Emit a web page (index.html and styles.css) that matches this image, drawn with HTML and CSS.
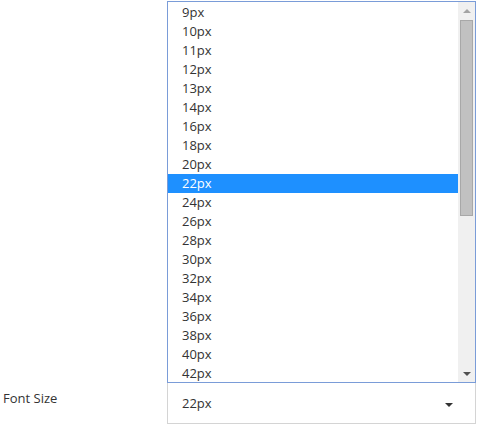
FILE: index.html
```html
<!DOCTYPE html>
<html>
<head>
<meta charset="utf-8">
<link rel="stylesheet" href="styles.css">
</head>
<body>
<div class="form-row">
  <div class="label">Font Size</div>
  <div class="control">
    <div class="listbox">
      <ul class="options">
        <li>9px</li>
        <li>10px</li>
        <li>11px</li>
        <li>12px</li>
        <li>13px</li>
        <li>14px</li>
        <li>16px</li>
        <li>18px</li>
        <li>20px</li>
        <li class="selected">22px</li>
        <li>24px</li>
        <li>26px</li>
        <li>28px</li>
        <li>30px</li>
        <li>32px</li>
        <li>34px</li>
        <li>36px</li>
        <li>38px</li>
        <li>40px</li>
        <li>42px</li>
      </ul>
      <div class="scrollbar">
        <div class="sb-btn"><span class="tri-up"></span></div>
        <div class="sb-track"><div class="sb-thumb"></div></div>
        <div class="sb-btn sb-btn-down"><span class="tri-down"></span></div>
      </div>
    </div>
    <div class="select">
      <span class="value">22px</span>
      <span class="caret"></span>
    </div>
  </div>
</div>
</body>
</html>
```
FILE: styles.css
```css
html, body {
  margin: 0;
  padding: 0;
  background: #fff;
}
body {
  font-family: "Open Sans", "Noto Sans", sans-serif;
  font-size: 13px;
  color: #333;
}
.form-row {
  display: flex;
  align-items: flex-end;
  padding-top: 1px;
}
.label {
  width: 164px;
  padding-left: 3px;
  padding-bottom: 17px;
  font-size: 13px;
  line-height: 18px;
  color: #333;
}
.control {
  width: 309px;
  display: flex;
  flex-direction: column;
}
.listbox {
  position: relative;
  z-index: 1;
  height: 380px;
  border: 1px solid #7a9cd8;
  display: flex;
  overflow: hidden;
  margin-bottom: -1px;
  background: #fff;
}
.options {
  list-style: none;
  margin: 1px 0 0 0;
  padding: 0;
  flex: 1;
}
.options li {
  height: 19px;
  box-sizing: border-box;
  line-height: 18px;
  padding-left: 14px;
  padding-bottom: 1px;
  color: #333;
  white-space: nowrap;
}
.options li.selected {
  background: #1e90ff;
  color: #fff;
}
.scrollbar {
  width: 17px;
  background: #f0f0f0;
  display: flex;
  flex-direction: column;
}
.sb-btn {
  height: 17px;
  display: flex;
  align-items: center;
  justify-content: center;
}
.tri-up {
  width: 0;
  height: 0;
  border-left: 4px solid transparent;
  border-right: 4px solid transparent;
  border-bottom: 4px solid #a3a3a3;
}
.tri-down {
  width: 0;
  height: 0;
  border-left: 4px solid transparent;
  border-right: 4px solid transparent;
  border-top: 4px solid #505050;
}
.sb-track {
  flex: 1;
  padding: 1px 2px;
}
.sb-thumb {
  height: 196px;
  background: #c1c1c1;
  border: 1px solid #a8a8a8;
  box-sizing: border-box;
}
.select {
  height: 42px;
  box-sizing: border-box;
  border: 1px solid #d4d4d4;
  display: flex;
  align-items: center;
  justify-content: space-between;
  padding: 0 22px 0 14px;
}
.select .value {
  line-height: 18px;
}
.caret {
  width: 0;
  height: 0;
  border-left: 4px solid transparent;
  border-right: 4px solid transparent;
  border-top: 4px solid #333;
  margin-top: 3px;
}
```
